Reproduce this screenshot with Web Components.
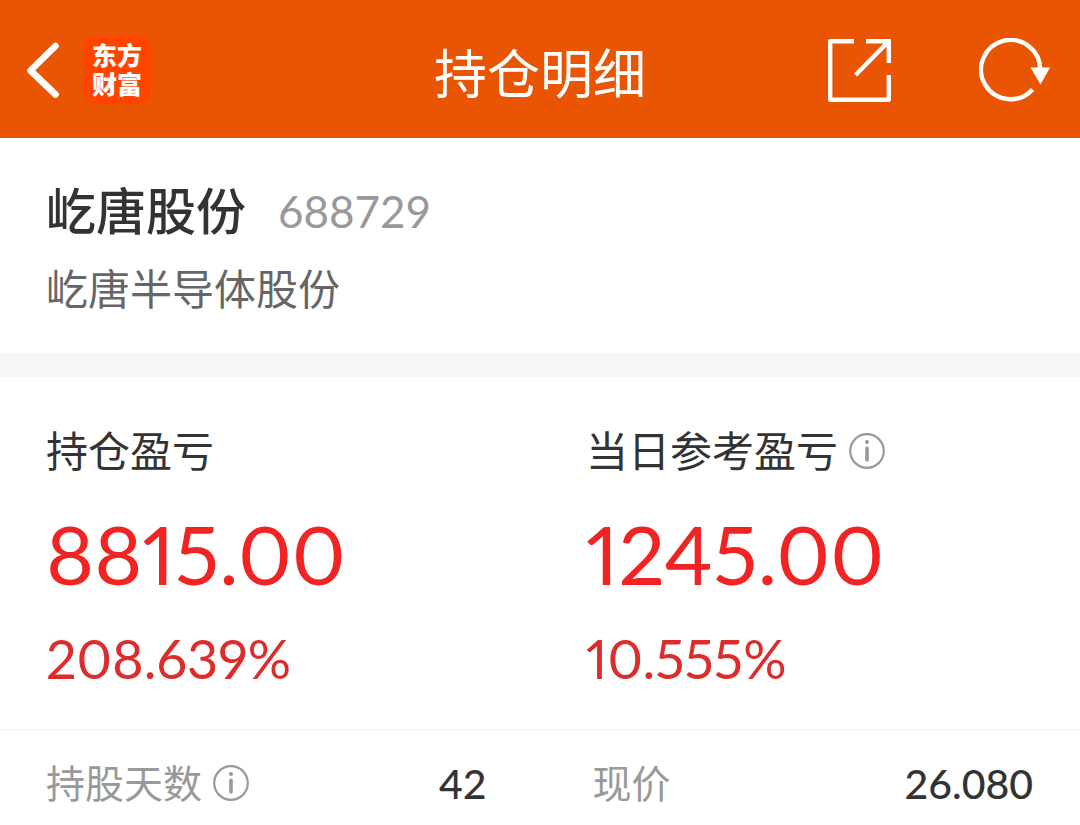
<!DOCTYPE html>
<html lang="zh-CN">
<head>
<meta charset="utf-8">
<meta name="viewport" content="width=device-width, initial-scale=1">
<title>持仓明细</title>
<style>
  body { margin: 0; background: #fff; color: #333; font-family: Lato, "Noto Sans CJK SC", sans-serif; }
</style>
</head>
<body>
<position-page></position-page>
<script>
  const define = (name, html) => {
    const template = document.createElement('template');
    template.innerHTML = html;
    customElements.define(name, class extends HTMLElement {
      constructor() {
        super();
        this.attachShadow({ mode: 'open' }).append(template.content.cloneNode(true));
      }
    });
  };

  define('brand-logo', `
    <style>
      :host { display: block; }
      a { display: grid; place-content: center; box-sizing: border-box; width: 68px; height: 68px; padding-top: 2px; border-radius: 14px; background: #ff4400;
          color: #fff; font: 900 25px/29px "Liberation Sans", "Noto Sans CJK SC", sans-serif; text-align: center; text-decoration: none; }
      span { display: block; height: 29px; }
    </style>
    <a href="#home"><span>东方</span><span>财富</span></a>`);

  define('info-button', `
    <style>
      :host { display: block; }
      button { display: block; padding: 0; border: 0; background: none; color: #999; }
      svg { display: block; }
    </style>
    <button type="button" aria-label="说明">
      <svg width="36" height="36" viewBox="0 0 36 36" fill="none" stroke="currentColor">
        <circle cx="18" cy="18" r="16.8" stroke-width="2.2"/>
        <path d="M18 15.2V27" stroke-width="3.6" stroke-linecap="round"/>
        <circle cx="18" cy="9" r="2.1" fill="currentColor" stroke="none"/>
      </svg>
    </button>`);

  define('app-header', `
    <style>
      :host { display: grid; grid-template-columns: 1fr auto 1fr; align-items: center; height: 138px;
              padding: 0 30px 0 26px; background: #ea5504; color: #fff; }
      .side { display: flex; align-items: center; gap: 23px; padding-top: 2px; }
      .end { justify-content: flex-end; gap: 88px; }
      h1 { margin: 0; padding: 4px 0 0 4px; font: 400 53px/60px "Noto Sans CJK SC", sans-serif; }
      button { padding: 0; border: 0; background: none; color: inherit; }
      svg { display: block; }
    </style>
    <div class="side">
      <button type="button" aria-label="返回">
        <svg width="34" height="56" viewBox="0 0 34 56" fill="none" stroke="currentColor" stroke-width="6.6" stroke-linecap="round" stroke-linejoin="round"><path d="M29.5 4 4.5 28.5 29.5 52.5"/></svg>
      </button>
      <brand-logo></brand-logo>
    </div>
    <h1><slot></slot></h1>
    <div class="side end">
      <button type="button" aria-label="分享">
        <svg width="63" height="63" viewBox="0 0 63 63" fill="none" stroke="currentColor" stroke-width="4.4" stroke-linejoin="round"><path d="M26 2.2H2.2V60.8H60.8V36"/><path d="M38 2.2H60.8V24M60 3 27.5 36" stroke-linejoin="miter"/></svg>
      </button>
      <button type="button" aria-label="刷新">
        <svg width="71" height="64" viewBox="0 0 71 64" fill="none" stroke="currentColor" stroke-width="4.4"><path d="M53.5 51.5A29.6 29.6 0 1 1 61.2 32.5"/><path d="M51.5 29.5H71L61.5 46.5Z" fill="currentColor" stroke="none"/></svg>
      </button>
    </div>`);

  define('stock-heading', `
    <style>
      :host { display: block; padding: 43px 46px 39px; border-bottom: 24px solid #f6f7f9; }
      .row { display: flex; align-items: center; gap: 32px; }
      h2 { margin: 0; font-size: 50px; line-height: 60px; font-weight: 500; }
      .code { color: #999; font-size: 44px; line-height: 56px; }
      .full { margin-top: 23px; color: #666; font-size: 42px; line-height: 50px; }
    </style>
    <div class="row"><h2><slot name="name"></slot></h2><span class="code"><slot name="code"></slot></span></div>
    <div class="full"><slot name="full"></slot></div>`);

  define('profit-figure', `
    <style>
      :host { display: block; font-variant-numeric: proportional-nums; }
      .label { display: flex; align-items: center; gap: 11px; font-size: 42px; line-height: 50px; }
      .amount { margin-top: 27px; color: #f12323; font-size: 82px; line-height: 100px; }
      .rate { margin-top: 26px; color: #dd2c2c; font-size: 54px; line-height: 60px; }
    </style>
    <div class="label"><slot name="label"></slot><slot name="info"></slot></div>
    <div class="amount"><slot name="amount"></slot></div>
    <div class="rate"><slot name="rate"></slot></div>`);

  define('detail-item', `
    <style>
      :host { display: flex; align-items: center; justify-content: space-between; line-height: 50px; }
      .label { display: flex; align-items: center; gap: 11px; color: #999; font-size: 39px; }
      .value { padding-top: 2px; font-size: 41px; font-weight: 500; }
    </style>
    <div class="label"><slot name="label"></slot><slot name="info"></slot></div>
    <div class="value"><slot name="value"></slot></div>`);

  define('position-page', `
    <style>
      :host { display: block; }
      .profit { display: grid; grid-template-columns: 1fr 1fr; padding: 49px 0 40px; border-bottom: 1px solid #f2f2f2; }
      .profit > * { padding-left: 46px; }
      .details { display: grid; grid-template-columns: 1fr 1fr; column-gap: 106px; padding: 27px 47px 15px 46px; }
    </style>
    <app-header>持仓明细</app-header>
    <main>
      <stock-heading>
        <span slot="name">屹唐股份</span><span slot="code">688729</span><span slot="full">屹唐半导体股份</span>
      </stock-heading>
      <section class="profit">
        <profit-figure>
          <span slot="label">持仓盈亏</span><span slot="amount">8815.00</span><span slot="rate">208.639%</span>
        </profit-figure>
        <profit-figure>
          <span slot="label">当日参考盈亏</span><info-button slot="info"></info-button>
          <span slot="amount">1245.00</span><span slot="rate">10.555%</span>
        </profit-figure>
      </section>
      <section class="details">
        <detail-item>
          <span slot="label">持股天数</span><info-button slot="info"></info-button><span slot="value">42</span>
        </detail-item>
        <detail-item>
          <span slot="label">现价</span><span slot="value">26.080</span>
        </detail-item>
      </section>
    </main>`);
</script>
</body>
</html>
